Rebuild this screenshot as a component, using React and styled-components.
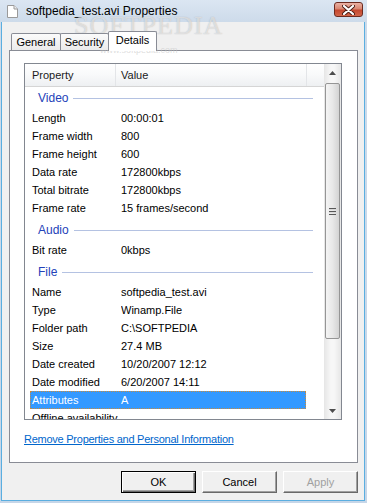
import React from 'react'
import styled, { createGlobalStyle } from 'styled-components'

const GlobalStyle = createGlobalStyle`
    html, body {
        margin: 0;
        padding: 0;
        background: #c9d8e9;
    }
    body {
        font-family: "Liberation Sans", Arial, sans-serif;
        font-size: 11px;
        color: #000;
    }
`

const Window = styled.div`
    position: relative;
    width: 367px;
    height: 503px;
    box-sizing: border-box;
    display: flex;
    flex-direction: column;
    overflow: hidden;
    background: linear-gradient(#dbe6f2 0px, #cddbea 22px, #c6d6e8 100%);
`

const TitleBar = styled.div`
    height: 22px;
    flex: none;
    display: flex;
    align-items: center;
    padding-left: 7px;
    padding-right: 4px;
`

const TitleText = styled.span`
    font-size: 12px;
    margin-left: 8px;
    flex: 1;
    color: #000;
`

const CloseButton = styled.div`
    width: 29px;
    height: 15px;
    box-sizing: border-box;
    margin-top: -3px;
    border: 1px solid #6d2b20;
    border-radius: 3px;
    background: linear-gradient(#eab1a4 0%, #d98671 45%, #c5482f 55%, #d2664b 100%);
    display: flex;
    align-items: center;
    justify-content: center;
`

const Watermark = styled.div`
    position: absolute;
    left: 74px;
    top: 11px;
    font-family: "Liberation Serif", serif;
    font-size: 26px;
    letter-spacing: 1px;
    color: rgba(255, 255, 255, 0.55);
    text-shadow: 0 0 1px rgba(120, 120, 120, 0.5);
    pointer-events: none;
`

const WatermarkSmall = styled.div`
    position: absolute;
    left: 100px;
    top: 45px;
    font-size: 9px;
    color: rgba(200, 200, 200, 0.6);
    pointer-events: none;
`

const Client = styled.div`
    flex: 1;
    margin: 0 2px 2px 1px;
    border-left: 1px solid #5aaee0;
    border-right: 1px solid #5aaee0;
    border-bottom: 1px solid #5aaee0;
    background: #f0f0f0;
    padding: 9px 6px 0 7px;
    display: flex;
    flex-direction: column;
`

const TabStrip = styled.div`
    height: 19px;
    display: flex;
    align-items: flex-end;
    padding-left: 2px;
`

const Tab = styled.div`
    position: relative;
    width: ${p => p.$w}px;
    height: ${p => (p.$active ? 20 : 17)}px;
    margin-left: ${p => (p.$first ? 0 : -1)}px;
    margin-bottom: ${p => (p.$active ? -1 : 0)}px;
    z-index: ${p => (p.$active ? 2 : 1)};
    box-sizing: border-box;
    border: 1px solid #898c95;
    border-bottom: none;
    border-radius: 2px 2px 0 0;
    background: ${p => (p.$active ? '#fff' : 'linear-gradient(#fbfbfb, #ebebeb)')};
    display: flex;
    align-items: center;
    justify-content: center;
    padding-bottom: ${p => (p.$active ? 3 : 0)}px;
    font-size: 11px;
`

const Panel = styled.div`
    height: 413px;
    box-sizing: border-box;
    border: 1px solid #898c95;
    background: #fff;
    padding: 12px 0 0 14px;
`

const ListView = styled.div`
    width: 318px;
    height: 357px;
    box-sizing: border-box;
    border: 1px solid #828790;
    display: flex;
    overflow: hidden;
`

const ListContent = styled.div`
    flex: 1;
    overflow: hidden;
`

const Header = styled.div`
    height: 23px;
    box-sizing: border-box;
    border-bottom: 1px solid #d5d5d5;
    background: linear-gradient(#ffffff 0%, #f8f9fa 50%, #eef0f2 100%);
    display: flex;
`

const HeaderCell = styled.div`
    width: ${p => p.$w}px;
    box-sizing: border-box;
    padding-left: ${p => p.$pad}px;
    border-right: 1px solid #e3e5e8;
    display: flex;
    align-items: center;
    color: #1a1a1a;
`

const Rows = styled.div`
    padding-left: 5px;
`

const GroupHeader = styled.div`
    width: 283px;
    height: 22px;
    margin-top: ${p => (p.$first ? 0 : 2)}px;
    display: flex;
    align-items: center;
    padding-left: 8px;
    box-sizing: border-box;
    font-size: 12px;
    color: #2342b9;
    &::after {
        content: '';
        flex: 1;
        height: 1px;
        margin-left: 5px;
        background: #b4c2e2;
    }
`

const Row = styled.div`
    width: 276px;
    height: 18px;
    box-sizing: border-box;
    display: flex;
    align-items: center;
    background: ${p => (p.$selected ? '#3399ff' : 'transparent')};
    color: ${p => (p.$selected ? '#fff' : '#000')};
    outline: ${p => (p.$selected ? '1px dotted #c98a3a' : 'none')};
    outline-offset: -1px;
    white-space: nowrap;
`

const NameCell = styled.div`
    width: 91px;
    flex: none;
    padding-left: 2px;
    box-sizing: border-box;
`

const ValueCell = styled.div`
    flex: 1;
    overflow: hidden;
`

const ScrollBar = styled.div`
    width: 17px;
    flex: none;
    display: flex;
    flex-direction: column;
    background: linear-gradient(90deg, #e6e6e6, #f7f7f7 40%, #f7f7f7 60%, #e6e6e6);
`

const ArrowButton = styled.div`
    height: 17px;
    flex: none;
    display: flex;
    align-items: center;
    justify-content: center;
`

const Track = styled.div`
    flex: 1;
    padding: 2px 0 2px;
    display: flex;
    flex-direction: column;
`

const Thumb = styled.div`
    height: ${p => p.$h}px;
    margin: 0 1px;
    box-sizing: border-box;
    border: 1px solid #959595;
    border-radius: 2px;
    background: linear-gradient(90deg, #f4f4f4 0%, #e8e8e8 50%, #d3d3d3 100%);
    display: flex;
    align-items: center;
    justify-content: center;
`

const Grip = styled.div`
    width: 7px;
    height: 7px;
    background: repeating-linear-gradient(#585858 0 1px, #d8d8d8 1px 2px, transparent 2px 3px);
`

const LinkText = styled.a`
    display: block;
    margin-top: 12px;
    color: #0066cc;
    text-decoration: underline;
    line-height: 14px;
    letter-spacing: -0.25px;
    cursor: pointer;
`

const ButtonRow = styled.div`
    display: flex;
    justify-content: flex-end;
    gap: 6px;
    margin-top: 8px;
`

const Button = styled.button`
    width: 75px;
    height: 22px;
    box-sizing: border-box;
    padding: 0;
    font-family: "Liberation Sans", Arial, sans-serif;
    font-size: 11px;
    background: #f0f0f0;
    border: 1px solid ${p => (p.$default ? '#000' : '#696969')};
    border-top-color: ${p => (p.$default ? '#000' : '#fff')};
    border-left-color: ${p => (p.$default ? '#000' : '#fff')};
    box-shadow: ${p => (p.$default
        ? 'inset 1px 1px 0 #fff, inset -1px -1px 0 #696969, inset -2px -2px 0 #a0a0a0'
        : 'inset -1px -1px 0 #a0a0a0')};
    color: ${p => (p.$disabled ? '#a0a0a0' : '#000')};
`

const sections = [
    {
        title: 'Video',
        rows: [
            ['Length', '00:00:01'],
            ['Frame width', '800'],
            ['Frame height', '600'],
            ['Data rate', '172800kbps'],
            ['Total bitrate', '172800kbps'],
            ['Frame rate', '15 frames/second'],
        ],
    },
    {
        title: 'Audio',
        rows: [['Bit rate', '0kbps']],
    },
    {
        title: 'File',
        rows: [
            ['Name', 'softpedia_test.avi'],
            ['Type', 'Winamp.File'],
            ['Folder path', 'C:\\SOFTPEDIA'],
            ['Size', '27.4 MB'],
            ['Date created', '10/20/2007 12:12'],
            ['Date modified', '6/20/2007 14:11'],
            ['Attributes', 'A'],
            ['Offline availability', ''],
        ],
    },
]

function FileIcon() {
    return (
        <svg width="11" height="13" viewBox="0 0 11 13">
            <path d="M0.5 0.5 H7 L10.5 4 V12.5 H0.5 Z" fill="#fff" stroke="#9a9a9a" />
            <path d="M7 0.5 V4 H10.5" fill="#eee" stroke="#9a9a9a" />
        </svg>
    )
}

function CloseGlyph() {
    return (
        <svg width="13" height="10" viewBox="0 0 13 10">
            <path d="M2 1 L11 9 M11 1 L2 9" stroke="#4a1c14" strokeWidth="4" strokeLinecap="round" />
            <path d="M2 1 L11 9 M11 1 L2 9" stroke="#fff" strokeWidth="2.2" strokeLinecap="round" />
        </svg>
    )
}

function Arrow({ down }) {
    return (
        <svg width="7" height="4" viewBox="0 0 7 4">
            <path d={down ? 'M0 0 H7 L3.5 4 Z' : 'M0 4 H7 L3.5 0 Z'} fill="#4d4d4d" />
        </svg>
    )
}

export default function App() {
    return (
        <Window>
            <GlobalStyle />
            <TitleBar>
                <FileIcon />
                <TitleText>softpedia_test.avi Properties</TitleText>
                <CloseButton><CloseGlyph /></CloseButton>
            </TitleBar>
            <Watermark>SOFTPEDIA</Watermark>
            <WatermarkSmall>www.softpedia.com</WatermarkSmall>
            <Client>
                <TabStrip>
                    <Tab $first $w={50}>General</Tab>
                    <Tab $w={49}>Security</Tab>
                    <Tab $active $w={49}>Details</Tab>
                </TabStrip>
                <Panel>
                    <ListView>
                        <ListContent>
                            <Header>
                                <HeaderCell $w={91} $pad={7}>Property</HeaderCell>
                                <HeaderCell $w={191} $pad={5}>Value</HeaderCell>
                            </Header>
                            <Rows>
                                {sections.map((s, i) => (
                                    <React.Fragment key={s.title}>
                                        <GroupHeader $first={i === 0}>{s.title}</GroupHeader>
                                        {s.rows.map(([name, value]) => (
                                            <Row key={name} $selected={name === 'Attributes'}>
                                                <NameCell>{name}</NameCell>
                                                <ValueCell>{value}</ValueCell>
                                            </Row>
                                        ))}
                                    </React.Fragment>
                                ))}
                            </Rows>
                        </ListContent>
                        <ScrollBar>
                            <ArrowButton><Arrow /></ArrowButton>
                            <Track>
                                <Thumb $h={256}><Grip /></Thumb>
                            </Track>
                            <ArrowButton><Arrow down /></ArrowButton>
                        </ScrollBar>
                    </ListView>
                    <LinkText>Remove Properties and Personal Information</LinkText>
                </Panel>
                <ButtonRow>
                    <Button $default>OK</Button>
                    <Button>Cancel</Button>
                    <Button $disabled>Apply</Button>
                </ButtonRow>
            </Client>
        </Window>
    )
}
